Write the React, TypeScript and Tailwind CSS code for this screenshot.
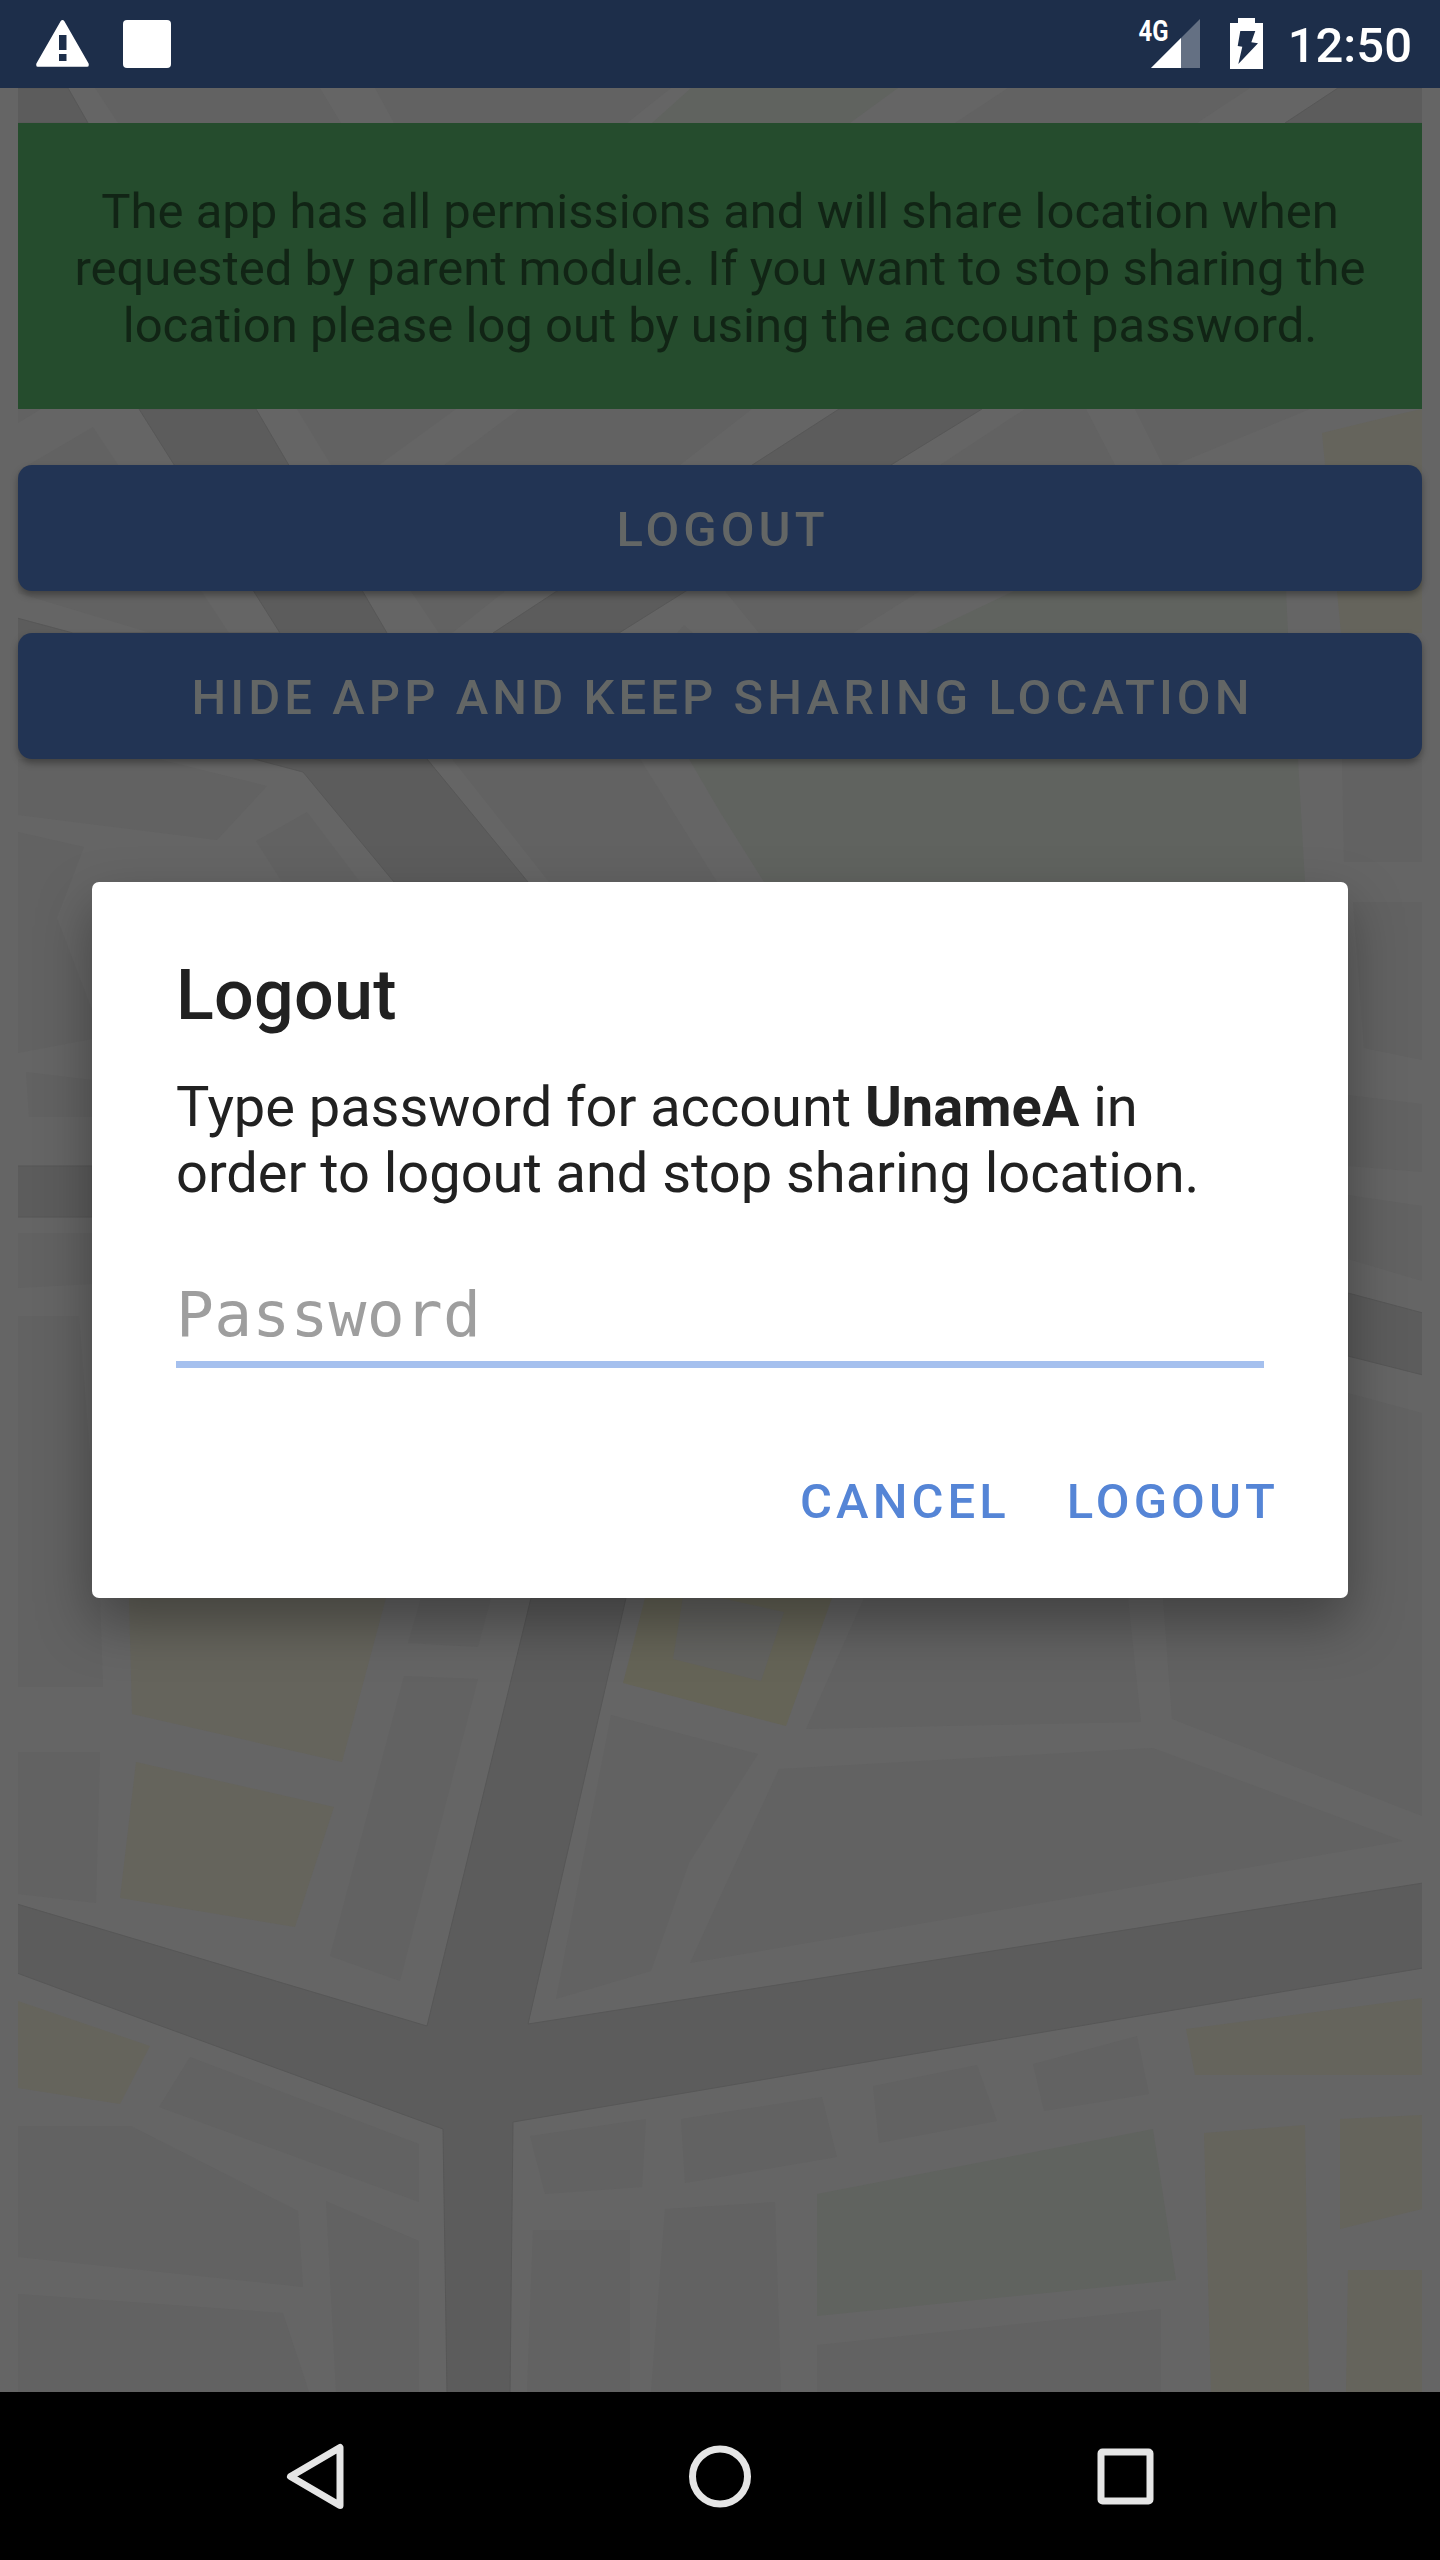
import type { ReactNode } from "react";

const BLOCKS = [
  "95,88 320,88 341,123 118,123",
  "375,88 671,88 627,123 394,123",
  "1008,88 1250,88 1197,123 955,123",
  "18,409 41,409 18,423",
  "93,427 229,633 151,633 18,593 18,471",
  "297,409 456,409 379,465 331,465",
  "519,409 752,409 680,465 505,591 452,633 439,633 411,591 444,465",
  "684,625 693,633 677,633",
  "1025,409 1086,409 1115,465 920,591 853,633 759,633 725,591 940,465",
  "1135,409 1310,409 1179,463 1177,465 1163,465",
  "1342,759 1422,759 1422,862 1344,862",
  "452,759 640,759 717,882 549,882",
  "18,759 158,759 267,786 217,840 18,815",
  "18,832 84,847 57,918 92,1010 92,1039 18,1053",
  "307,812 360,882 282,882 256,841",
  "26,1072 92,1080 92,1117 29,1117",
  "18,1233 92,1233 92,1284 18,1288",
  "18,1316 79,1316 90,1456 100,1598 103,1687 18,1687",
  "1353,902 1422,902 1422,1060 1364,1048",
  "1348,1095 1422,1104 1422,1172 1348,1166",
  "1348,1195 1422,1206 1422,1281 1348,1259",
  "1300,1380 1348,1393 1422,1413 1422,1816 1172,1719 1163,1598",
  "18,1752 100,1752 96,1903 18,1894",
  "421,1598 491,1598 478,1647 408,1643",
  "404,1676 478,1679 400,1981 330,1956",
  "611,1715 720,1744 758,1754 720,1814 689,1863 651,1971 556,1999",
  "864,1598 1128,1598 1141,1722 806,1729",
  "779,1769 1153,1748 1403,1841 720,1958 690,1963 720,1897",
  "190,2057 419,2144 419,2202 159,2107",
  "18,2126 131,2126 298,2211 303,2287 18,2257",
  "18,2294 283,2313 309,2392 18,2392",
  "326,2201 419,2241 419,2392 336,2392",
  "530,2136 646,2119 642,2187 545,2194",
  "533,2230 630,2230 630,2392 527,2392",
  "681,2119 822,2097 837,2157 685,2183",
  "665,2209 775,2202 781,2392 651,2392",
  "873,2086 977,2065 997,2121 879,2143",
  "1033,2064 1137,2036 1149,2094 1044,2111",
  "817,2345 1161,2309 1161,2392 817,2392",
];

const PARKS = [
  "691,88 898,88 850,123 652,123",
  "1014,591 1286,591 1288,633 1298,759 1305,882 764,882 720,812 689,759 926,633",
  "817,2194 1153,2129 1176,2280 817,2316",
];

const PLAZAS = [
  "1322,433 1404,413 1422,409 1422,633 1341,633",
  "129,1598 386,1598 342,1762 132,1714",
  "136,1762 334,1807 295,1927 120,1898",
  "18,2001 150,2046 120,2104 18,2088",
  "1186,2029 1422,1998 1422,2075 1195,2075",
  "1204,2133 1305,2125 1309,2392 1211,2392",
  "1340,2119 1422,2115 1422,2209 1340,2229",
  "1348,2270 1422,2270 1422,2392 1346,2392",
];

const ROADS = [
  "17,88 68,88 88,123 17,123",
  "1338,88 1423,88 1423,123 1285,123",
  "139,409 256,409 387,633 427,759 528,882 394,882 303,772 254,759 17,698 17,618 73,633 280,633",
  "839,409 982,409 686,591 619,633 493,633 557,591",
  "17,1166 92,1166 92,1217 17,1217",
  "1348,1293 1423,1313 1423,1375 1348,1356",
  "531,1598 626,1598 528,2024 720,1994 1423,1883 1423,1968 878,2060 720,2087 513,2122 510,2393 447,2393 443,2129 90,2000 17,1973 17,1904 427,2026",
];

function MapBackdrop() {
  return (
    <svg
      className="absolute top-0 left-[18px] h-[2304px] w-[1404px]"
      viewBox="18 88 1404 2304"
      aria-hidden="true"
    >
      {BLOCKS.map((p) => (
        <polygon key={p} points={p} fill="#626262" />
      ))}
      {PARKS.map((p) => (
        <polygon key={p} points={p} fill="#60635f" />
      ))}
      {PLAZAS.map((p) => (
        <polygon key={p} points={p} fill="#65645c" />
      ))}
      <polygon points="645,1598 832,1598 786,1726 623,1683" fill="#656457" />
      <polygon points="684,1590 784,1612 761,1681 673,1659" fill="#636360" />
      {ROADS.map((p) => (
        <polygon key={p} points={p} fill="#5c5c5c" stroke="#575757" strokeWidth="1" />
      ))}
    </svg>
  );
}

function StatusBar() {
  return (
    <header className="flex h-[88px] shrink-0 items-start justify-between bg-[#1d2e4a] text-white">
      <div className="flex items-start gap-[34px] pt-5 pl-9">
        <svg className="h-12 w-[53px]" viewBox="0 0 53 48" aria-hidden="true">
          <path
            fill="white"
            fillRule="evenodd"
            d="M24.6 1.2Q26.5-1.2 28.4 1.2L52.6 43.4Q53.4 46.8 51 46.8H2Q-.4 46.8 .4 43.4ZM23 15V30H30.5V15ZM23 34V41H30.5V34Z"
          />
        </svg>
        <div className="h-12 w-12 rounded-[4px] bg-white" />
      </div>
      <div className="flex h-full items-start pr-[28px]">
        <svg className="h-[88px] w-[62px]" viewBox="1137 0 62 88" aria-hidden="true">
          <path d="M1150 68L1199 19V68Z" fill="#647083" />
          <path d="M1150 68L1180 38V68Z" fill="white" />
          <text
            x="1137.5"
            y="41"
            fill="white"
            fontFamily="Roboto, sans-serif"
            fontSize="29"
            fontWeight="700"
            textLength="30"
            lengthAdjust="spacingAndGlyphs"
          >
            4G
          </text>
        </svg>
        <svg className="ml-[30px] h-[88px] w-[33px]" viewBox="1229 0 33 88" aria-hidden="true">
          <path
            fill="white"
            fillRule="evenodd"
            d="M1237 18H1254V23H1262V69H1229V23H1237ZM1239.3 31L1236.7 46L1241.3 46.7L1237.3 64L1257 43.3L1250.3 42.3L1254.3 31Z"
          />
        </svg>
        <time className="ml-[25px] pt-[17px] text-[49px] leading-[58px] font-medium">12:50</time>
      </div>
    </header>
  );
}

function AppButton({ children }: { children: ReactNode }) {
  return (
    <button className="h-[126px] w-full rounded-[14px] bg-[#223454] pt-1 pl-[5px] text-[49px] font-medium tracking-[4.07px] text-[#636665] shadow-[0_4px_7px_rgba(0,0,0,0.34)]">
      {children}
    </button>
  );
}

function LogoutDialog() {
  return (
    <div className="absolute inset-0 flex items-center justify-center">
      <section
        role="dialog"
        aria-label="Logout"
        className="flex h-[716px] w-[1256px] flex-col rounded-[7px] bg-white px-[84px] pt-[72px] text-[#212121] shadow-[0_24px_54px_rgba(0,0,0,0.34)]"
      >
        <h1 className="text-[70px] leading-[82px] font-medium tracking-[0.3px]">Logout</h1>
        <p className="mt-[38px] text-[56px] leading-[66px] tracking-[-0.04px] whitespace-nowrap">
          Type password for account <b className="font-bold">UnameA</b> in
          <br />
          order to logout and stop sharing location.
        </p>
        <input
          type="text"
          placeholder="Password"
          className="mt-[58px] h-[104px] w-[1088px] border-b-[7px] border-[#a5c0ee] pt-1 font-['DejaVu_Sans_Mono',monospace] text-[63px] tracking-[0.2px] outline-none placeholder:text-[#9e9e9e]"
        />
        <div className="mt-[86px] -mr-[15px] flex justify-end gap-[57px] text-[49px] leading-[96px] font-medium tracking-[4.07px] text-[#5585d6]">
          <button>CANCEL</button>
          <button>LOGOUT</button>
        </div>
      </section>
    </div>
  );
}

function NavigationBar() {
  return (
    <nav className="flex h-[168px] shrink-0 items-center justify-center bg-black">
      <button className="flex w-[405px] justify-center" aria-label="Back">
        <svg className="h-[70px] w-[70px]" viewBox="0 0 70 70" fill="none" stroke="#e5e5e5" strokeWidth="7" strokeLinejoin="round">
          <path d="M60 6.500V64.500L10.500 35.500Z" />
        </svg>
      </button>
      <button className="flex w-[405px] justify-center" aria-label="Home">
        <svg className="h-[70px] w-[70px]" viewBox="0 0 70 70" fill="none" stroke="#e5e5e5" strokeWidth="7">
          <circle cx="35" cy="35.500" r="27.500" />
        </svg>
      </button>
      <button className="flex w-[405px] justify-center" aria-label="Recent apps">
        <svg className="h-[70px] w-[70px]" viewBox="0 0 70 70" fill="none" stroke="#e5e5e5" strokeWidth="7">
          <rect x="11" y="11" width="49" height="49" rx="1.500" />
        </svg>
      </button>
    </nav>
  );
}

export default function App() {
  return (
    <div className="flex h-[2560px] w-[1440px] flex-col overflow-hidden font-['Roboto',sans-serif]">
      <StatusBar />
      <main className="relative flex-1 overflow-hidden bg-[#656565] px-[18px] pt-[35px]">
        <MapBackdrop />
        <div className="relative flex flex-col">
          <p className="h-[286px] bg-[#254c2d] pt-[60px] text-center text-[49px] leading-[57px] whitespace-nowrap text-[#112415]">
            The app has all permissions and will share location when
            <br />
            requested by parent module. If you want to stop sharing the
            <br />
            location please log out by using the account password.
          </p>
          <div className="mt-14 flex flex-col gap-[42px]">
            <AppButton>LOGOUT</AppButton>
            <AppButton>HIDE APP AND KEEP SHARING LOCATION</AppButton>
          </div>
        </div>
        <LogoutDialog />
      </main>
      <NavigationBar />
    </div>
  );
}
